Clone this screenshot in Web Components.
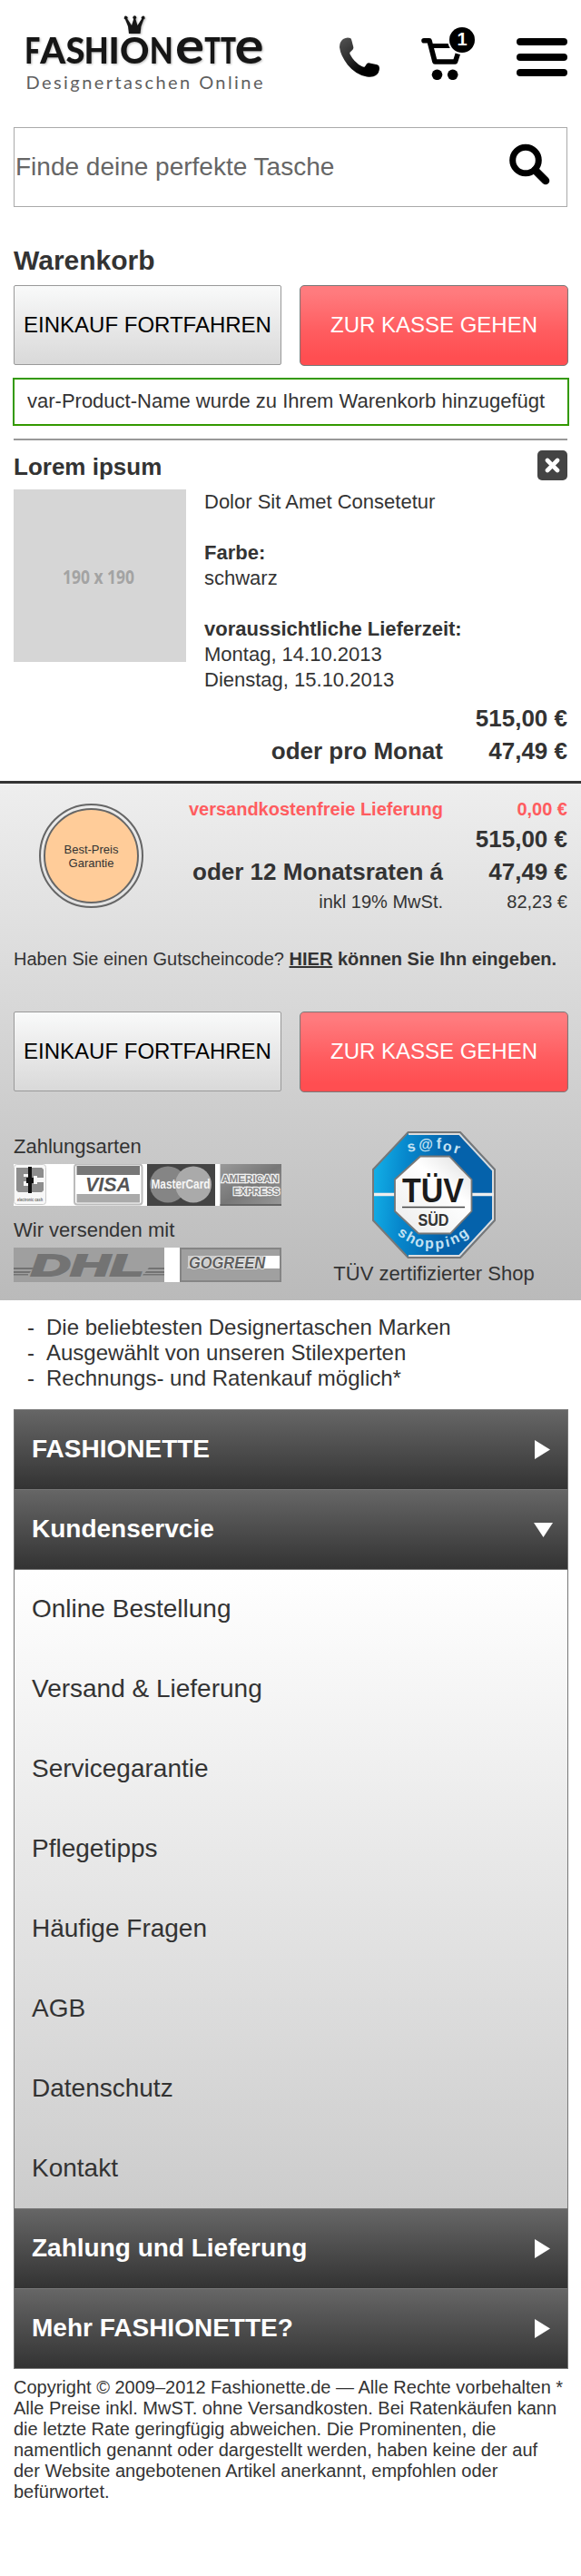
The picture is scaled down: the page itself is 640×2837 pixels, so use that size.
<!DOCTYPE html>
<html lang="de">
<head>
<meta charset="utf-8">
<title>Warenkorb – Fashionette</title>
<style>
html{background:#fff}
body{margin:0;width:640px;height:2837px;overflow-x:hidden;font-family:"Liberation Sans",Arial,sans-serif;color:#333;background:#fff}
</style>
</head>
<body>
<shop-header count="1"></shop-header>
<search-box placeholder="Finde deine perfekte Tasche"></search-box>
<cart-heading>Warenkorb</cart-heading>
<action-bar>
  <shop-button>EINKAUF FORTFAHREN</shop-button>
  <shop-button kind="primary">ZUR KASSE GEHEN</shop-button>
</action-bar>
<notice-box>var-Product-Name wurde zu Ihrem Warenkorb hinzugefügt</notice-box>
<cart-item>
  <span slot="name">Lorem ipsum</span>
  <span slot="desc">Dolor Sit Amet Consetetur</span>
  <span slot="color">schwarz</span>
  <span slot="from">Montag, 14.10.2013</span>
  <span slot="to">Dienstag, 15.10.2013</span>
  <span slot="price">515,00 €</span>
  <span slot="rate">47,49 €</span>
</cart-item>
<order-summary>
  <action-bar slot="actions">
    <shop-button>EINKAUF FORTFAHREN</shop-button>
    <shop-button kind="primary">ZUR KASSE GEHEN</shop-button>
  </action-bar>
  <payment-logos slot="partners"></payment-logos>
  <trust-seal slot="partners"></trust-seal>
</order-summary>
<usp-list>
  <usp-item>Die beliebtesten Designertaschen Marken</usp-item>
  <usp-item>Ausgewählt von unseren Stilexperten</usp-item>
  <usp-item>Rechnungs- und Ratenkauf möglich*</usp-item>
</usp-list>
<nav-accordion>
  <nav-section label="FASHIONETTE"></nav-section>
  <nav-section label="Kundenservcie" open>
    <nav-link>Online Bestellung</nav-link>
    <nav-link>Versand &amp; Lieferung</nav-link>
    <nav-link>Servicegarantie</nav-link>
    <nav-link>Pflegetipps</nav-link>
    <nav-link>Häufige Fragen</nav-link>
    <nav-link>AGB</nav-link>
    <nav-link>Datenschutz</nav-link>
    <nav-link>Kontakt</nav-link>
  </nav-section>
  <nav-section label="Zahlung und Lieferung"></nav-section>
  <nav-section label="Mehr FASHIONETTE?"></nav-section>
</nav-accordion>
<legal-note>Copyright © 2009–2012 Fashionette.de — Alle Rechte vorbehalten * Alle Preise inkl. MwST. ohne Versandkosten. Bei Ratenkäufen kann die letzte Rate geringfügig abweichen. Die Prominenten, die namentlich genannt oder dargestellt werden, haben keine der auf der Website angebotenen Artikel anerkannt, empfohlen oder befürwortet.</legal-note>

<script>
const define = (name, html) => customElements.define(name, class extends HTMLElement {
  constructor() {
    super();
    this.attachShadow({mode: 'open'});
  }
  connectedCallback() {
    this.shadowRoot.innerHTML = typeof html === 'function' ? html(this) : html;
  }
});

define('shop-header', el => `
<style>
:host{display:flex;box-sizing:border-box;height:140px;padding:0 15px 0 20px;align-items:flex-start;gap:46px}
svg{display:block;flex:none}
.logo{margin:0 auto 0 0}
.phone{margin-top:41px}
.cart{position:relative;margin-top:30px;width:59px;height:58px}
.count{position:absolute;right:0;top:0;width:28px;height:28px;border-radius:50%;background:#000;color:#fff;font:bold 20px/27px "Liberation Sans",Arial,sans-serif;text-align:center}
.menu{display:flex;flex-direction:column;gap:9px;margin-top:42px;width:56px}
.menu i{height:8px;border-radius:4px;background:#000}
</style>
<svg class="logo" width="280" height="110" viewBox="20 0 280 110">
  <defs><filter id="s" x="-5%" y="-20%" width="110%" height="150%"><feDropShadow dx="1" dy="1" stdDeviation=".8" flood-color="#000" flood-opacity=".28"/></filter></defs>
  <g fill="#171716" filter="url(#s)">
    <path d="M142 37 L141 29 L138 21.500 a2 2 0 1 1 2.300 -.7 L145 28 L147.200 21 a2 2 0 1 1 2.200 0 L151.500 28 L156 20.800 a2 2 0 1 1 2.300 .7 L155.500 29 L154.500 37 Z"/>
    <g font-family="Lato,sans-serif" font-weight="900" font-size="40">
      <text y="70"><tspan x="27.300" textLength="17" lengthAdjust="spacingAndGlyphs">F</tspan><tspan x="44.300" textLength="28" lengthAdjust="spacingAndGlyphs">A</tspan><tspan x="72.400" textLength="21" lengthAdjust="spacingAndGlyphs">S</tspan><tspan x="92.800" textLength="27" lengthAdjust="spacingAndGlyphs">H</tspan><tspan x="119.600" textLength="12.200" lengthAdjust="spacingAndGlyphs">I</tspan><tspan x="132" textLength="32.500" lengthAdjust="spacingAndGlyphs">O</tspan><tspan x="164.800" textLength="26" lengthAdjust="spacingAndGlyphs">N</tspan><tspan x="193" font-size="55" font-weight="700" textLength="32" lengthAdjust="spacingAndGlyphs">e</tspan><tspan x="225.300" textLength="17.500" lengthAdjust="spacingAndGlyphs">T</tspan><tspan x="243" textLength="17" lengthAdjust="spacingAndGlyphs">T</tspan><tspan x="258.500" font-size="55" font-weight="700" textLength="32" lengthAdjust="spacingAndGlyphs">e</tspan></text>
    </g>
  </g>
  <text x="28.500" y="98" font-family="Lato,sans-serif" font-size="20" fill="#5f5f5f" textLength="261" lengthAdjust="spacing">Designertaschen Online</text>
</svg>
<svg class="phone" width="44" height="44" viewBox="0 0 44 44">
  <defs><linearGradient id="p" x1="0" y1="0" x2=".8" y2="1"><stop offset="0" stop-color="#555"/><stop offset=".45" stop-color="#2b2b2b"/><stop offset=".8" stop-color="#000"/></linearGradient></defs>
  <path fill="url(#p)" d="M4 2 Q8-.5 12 1 Q13 1.500 13.500 4 L15.300 11 Q15.600 13 14 14.300 L11.600 16.500 Q11 17.200 11.600 18.700 Q16 27.500 24.500 32 Q27 33.400 28 32.200 L30 29.300 Q31.200 28 33.200 28.400 L41.500 30.300 Q44 31 44 34 Q44 39 40 42 Q37 44.500 30 43.500 Q18 41.500 9 30.500 Q1 20 0 11 Q0 5 4 2 Z"/>
</svg>
<div class="cart">
  <svg width="59" height="58" viewBox="0 0 59 58">
    <path d="M3 14.800 H9 L15 38 H37.500 L41.500 25.500" fill="none" stroke="#000" stroke-width="5.600" stroke-linecap="round" stroke-linejoin="round"/>
    <path d="M10 20.500 H32" stroke="#000" stroke-width="5"/>
    <circle cx="17.500" cy="52.300" r="5.800"/><circle cx="34.700" cy="52.300" r="5.800"/>
    <circle cx="45" cy="14.500" r="15.700" fill="#fff"/>
  </svg>
  <span class="count">${el.getAttribute('count')}</span>
</div>
<div class="menu"><i></i><i></i><i></i></div>`);

define('search-box', el => `
<style>
:host{display:flex;box-sizing:border-box;margin:0 15px;height:88px;border:1px solid #aaa;align-items:center;justify-content:space-between;padding:0 18px 0 1px}
span{font-size:28px;line-height:32px;color:#666}
svg{display:block;margin-top:-6px}
</style>
<span>${el.getAttribute('placeholder')}</span>
<svg width="46" height="46" viewBox="0 0 46 46" fill="none" stroke="#000"><circle cx="19" cy="18.500" r="14.300" stroke-width="7"/><path d="M29.500 29.500 L41 41" stroke-width="8.600" stroke-linecap="round"/></svg>`);

define('cart-heading', `<style>:host{display:block;margin:42px 15px 10px;font-size:30px;font-weight:bold;line-height:34px}</style><slot></slot>`);

define('action-bar', `<style>:host{display:grid;grid-template-columns:295px 296px;column-gap:20px;align-items:start;height:89px;margin-left:15px}</style><slot></slot>`);

define('shop-button', `
<style>
:host{display:flex;box-sizing:border-box;height:88px;align-items:center;justify-content:center;border:1px solid #999;border-radius:2px;background:linear-gradient(#f9fafa,#ececec 40%,#d9d9d9);color:#000;font-size:24px;white-space:nowrap;padding-bottom:1px}
:host([kind="primary"]){height:89px;padding-bottom:2px;border-color:#777;border-radius:5px;background:linear-gradient(#ff7b7e 8%,#ff5c5f 58%,#ff4e51 90%);color:#fff}
</style><slot></slot>`);

define('notice-box', `<style>:host{display:block;box-sizing:border-box;height:53px;margin:13px 13px 0 14px;padding:0 14px;border:2px solid #390;font-size:22px;line-height:47px;white-space:nowrap}</style><slot></slot>`);

define('cart-item', `
<style>
:host{display:block;margin:14px 15px 0;border-top:2px solid #999;height:375px}
.head{display:flex;justify-content:space-between;align-items:flex-start;height:54px;font-size:26px;line-height:30px;font-weight:bold}
.head slot{display:block;margin-top:14px}
.close{display:flex;width:33px;height:33px;margin-top:11px;border-radius:5px;background:#444;align-items:center;justify-content:center}
.body{display:flex;gap:20px;height:230px}
.pic{flex:none;width:190px;height:190px;background:#d6d6d6}
.pic svg{display:block}
.info{font-size:22px;line-height:28px}
.info div{height:28px}
b{font-weight:bold}
.prices{display:grid;grid-template-columns:1fr 137px;text-align:right;font-size:26px;line-height:36px;font-weight:bold;padding:4px 0 0}
</style>
<div class="head"><slot name="name"></slot><span class="close"><svg width="19" height="19" viewBox="0 0 19 19"><path d="M4 4 L15 15 M15 4 L4 15" stroke="#fff" stroke-width="4.600" stroke-linecap="round"/></svg></span></div>
<div class="body">
  <div class="pic"><svg width="190" height="190"><text x="54" y="104" font-family="Open Sans,Noto Sans,sans-serif" font-weight="700" font-size="21" fill="#a3a3a3" textLength="79" lengthAdjust="spacingAndGlyphs">190 x 190</text></svg></div>
  <div class="info">
    <div><slot name="desc"></slot></div><div></div>
    <div><b>Farbe:</b></div><div><slot name="color"></slot></div><div></div>
    <div><b>voraussichtliche Lieferzeit:</b></div>
    <div><slot name="from"></slot></div><div><slot name="to"></slot></div>
  </div>
</div>
<div class="prices"><span></span><slot name="price"></slot><span>oder pro Monat</span><slot name="rate"></slot></div>`);

define('order-summary', `
<style>
:host{display:block;box-sizing:border-box;height:572px;border-top:3px solid #333;background:linear-gradient(#eee,#bababa)}
.top{display:flex;justify-content:space-between;padding:22px 15px 0 43px}
.badge{box-sizing:border-box;width:115px;height:115px;border:2px solid #666;border-radius:50%;padding:3px}
.badge div{box-sizing:border-box;width:105px;height:105px;border:2px solid #666;border-radius:50%;background:#fc9;display:flex;align-items:center;justify-content:center;text-align:center;font-size:13px;line-height:15px}
.rows{display:grid;grid-template-columns:1fr 137px;grid-template-rows:29px 36px 37px 28px;text-align:right;white-space:nowrap;margin-top:-8px}
.s{font-size:20px;line-height:28px}
.b{font-size:26px;line-height:36px;font-weight:bold}
.r{color:#ff5c5f;font-weight:bold}
.voucher{margin:35px 15px 0;font-size:20px;line-height:28px;white-space:nowrap}
.actions{margin-top:44px}
.partners{display:flex;margin-top:43px}
</style>
<div class="top">
  <div class="badge"><div>Best-Preis<br>Garantie</div></div>
  <div class="rows">
    <span class="s r">versandkostenfreie Lieferung</span><span class="s r">0,00 €</span>
    <span></span><span class="b">515,00 €</span>
    <span class="b">oder 12 Monatsraten á</span><span class="b">47,49 €</span>
    <span class="s">inkl 19% MwSt.</span><span class="s">82,23 €</span>
  </div>
</div>
<div class="voucher">Haben Sie einen Gutscheincode? <b><u>HIER</u> können Sie Ihn eingeben.</b></div>
<div class="actions"><slot name="actions"></slot></div>
<div class="partners"><slot name="partners"></slot></div>`);

define('payment-logos', `
<style>
:host{display:block;margin:3px 0 0 15px;width:295px;font-size:22px}
.t{height:33px;line-height:28px}
svg{display:block}
.t2{margin-top:13px}
</style>
<div class="t">Zahlungsarten</div>
<svg width="295" height="46" viewBox="0 0 295 46" font-family="Liberation Sans,Arial,sans-serif">
  <defs><linearGradient id="ax" x1="0" y1="0" x2="1" y2="1"><stop offset="0" stop-color="#999"/><stop offset=".5" stop-color="#777"/><stop offset="1" stop-color="#999"/></linearGradient></defs>
  <rect width="295" height="46" fill="#fff"/>
  <rect x=".5" y=".5" width="35" height="44" rx="3" fill="#f7f7f7" stroke="#ccc"/>
  <path d="M3 4 H16 V11 H11 V14 H16 V19 H11 V24 H16 V31 H5 L3 29 Z M20 4 H31 L33 6 V15 H26 V13 H22 V22 H26 V20 H33 V29 L31 31 H20 Z" fill="#8d8d8d"/>
  <path d="M16 3 H20 V15 H22 V21 H20 V32 H16 V21 H14 V15 H16 Z" fill="#111"/>
  <text x="4" y="40.500" font-size="5" font-weight="bold" fill="#666" textLength="28" lengthAdjust="spacingAndGlyphs">electronic cash</text>
  <rect x="67" y=".5" width="74.500" height="44" rx="3" fill="#fff" stroke="#bbb" stroke-width="2"/>
  <rect x="69.500" y="2" width="69.500" height="10" fill="#777"/><rect x="69.500" y="33" width="69.500" height="9.500" fill="#aaa"/>
  <text x="79" y="30" font-size="22" font-weight="bold" font-style="italic" fill="#555" textLength="50" lengthAdjust="spacingAndGlyphs">VISA</text>
  <rect x="147" width="75" height="46" fill="#444"/>
  <circle cx="170" cy="22.500" r="20" fill="#858585"/><circle cx="198" cy="22.500" r="20" fill="#aaa"/>
  <text x="151.500" y="27" font-size="14" font-weight="bold" fill="#f6f6f6" textLength="65" lengthAdjust="spacingAndGlyphs">MasterCard</text>
  <rect x="227.500" width="67.500" height="46" fill="url(#ax)"/><path d="M227.500 45 H295" stroke="#666" stroke-width="2"/>
  <g font-size="10.500" font-weight="bold" fill="#858585" stroke="#f1f1f1" stroke-width="2.400" paint-order="stroke">
    <text x="229" y="20" textLength="63" lengthAdjust="spacingAndGlyphs">AMERICAN</text><text x="242" y="34" textLength="51" lengthAdjust="spacingAndGlyphs">EXPRESS</text>
  </g>
</svg>
<div class="t t2">Wir versenden mit</div>
<svg width="295" height="38" viewBox="0 0 295 38" font-family="Liberation Sans,Arial,sans-serif">
  <rect width="295" height="38" fill="#fff"/><rect width="166" height="38" fill="#9f9f9f"/>
  <path fill="#737373" d="M0 22 H22 L20.500 24 H0 Z M0 26 H19 L17.500 28 H0 Z M0 29 H16 V30.500 H0 Z M149 22 H166 V24 H147.500 Z M146 26 H166 V28 H144.500 Z M143 29 H166 V30.500 H142 Z"/>
  <text x="19" y="30.500" font-size="33.500" font-weight="bold" font-style="italic" fill="#737373" stroke="#737373" stroke-width="2" textLength="124" lengthAdjust="spacingAndGlyphs">DHL</text>
  <rect x="184" y="1" width="110" height="36" fill="#a0a0a0" stroke="#858585" stroke-width="2"/>
  <path d="M195 9 H293 V23 H191.500 Z" fill="#fff"/>
  <rect x="192" y="9" width="84" height="14" fill="#ccc"/>
  <text x="193" y="23" font-size="19" font-weight="bold" font-style="italic" fill="#5f5f5f" stroke="#eee" stroke-width="1.500" paint-order="stroke" textLength="84" lengthAdjust="spacingAndGlyphs">GOGREEN</text>
</svg>`);

define('trust-seal', `
<style>
:host{display:block;margin:0 0 0 20px;width:296px;text-align:center;font-size:22px;line-height:28px}
svg{display:block;margin:0 auto 3px}
</style>
<svg width="136" height="140" viewBox="0 0 136 140" font-family="Liberation Sans,Arial,sans-serif" text-anchor="middle">
  <defs><linearGradient id="b" x1="0" y1=".4" x2="1" y2=".5"><stop offset="0" stop-color="#12aee6"/><stop offset=".25" stop-color="#0787cc"/><stop offset=".6" stop-color="#0562ab"/><stop offset="1" stop-color="#0562ab"/></linearGradient>
  <linearGradient id="w" x1="1" y1="0" x2=".2" y2="1"><stop offset="0" stop-color="#ddd"/><stop offset=".4" stop-color="#fff"/><stop offset="1" stop-color="#eee"/></linearGradient></defs>
  <path d="M39.500 1 H97 L135 42 V98 L97 139 H39.500 L1 98 V42 Z" fill="url(#b)" stroke="#777" stroke-width="2"/>
  <path d="M40 3 H96 L133 43 V97 L96 137 H40" fill="none" stroke="#ddd" stroke-width="2"/>
  <path d="M2 69.500 H134" stroke="#eee" stroke-width="3.500"/>
  <path d="M53 27.500 H85 L109.500 53 V88 L86 112.500 H51 L25 88 V53 Z" fill="url(#w)" stroke="#777" stroke-width="1.800"/>
  <text x="67" y="78" font-size="36" font-weight="bold" fill="#1b1b1b" textLength="68" lengthAdjust="spacingAndGlyphs">TÜV</text>
  <path d="M33 83.500 H102" stroke="#444" stroke-width="1.500"/>
  <text x="67.500" y="103.500" font-size="19" font-weight="bold" fill="#333" textLength="34" lengthAdjust="spacingAndGlyphs">SÜD</text>
  <g fill="#c4e2f3" font-weight="bold">
    <g font-size="16"><text transform="translate(44,22) rotate(-10)">s</text><text x="59" y="20">@</text><text x="73.500" y="19">f</text><text transform="translate(82,22) rotate(8)">o</text><text transform="translate(92,24) rotate(16)">r</text></g>
    <g font-size="16"><text transform="translate(31,116) rotate(35)">s</text><text transform="translate(40.500,122) rotate(28)">h</text><text transform="translate(51,127) rotate(14)">o</text><text transform="translate(63,129)">p</text><text transform="translate(74.500,129) rotate(-5)">p</text><text transform="translate(84,127) rotate(-12)">i</text><text transform="translate(93,123) rotate(-25)">n</text><text transform="translate(103,117) rotate(-35)">g</text></g>
  </g>
</svg>
TÜV zertifizierter Shop`);

define('usp-list', `<style>:host{display:block;margin:16px 15px 0;padding-left:15px;height:104px}</style><slot></slot>`);
define('usp-item', `<style>:host{display:flex;font-size:24px;line-height:28px;height:28px}i{font-style:normal;width:21px}</style><i>-</i><slot></slot>`);

define('nav-accordion', `<style>:host{display:block;box-sizing:border-box;width:611px;margin-left:15px;border:1px solid #777;border-top:0}</style><slot></slot>`);
define('nav-section', el => `
<style>
:host{display:block}
.head{display:flex;box-sizing:border-box;height:88px;border-top:1px solid #777;padding:0 19px;align-items:center;justify-content:space-between;background:linear-gradient(#666,#333);color:#fff;font-size:28px;font-weight:bold}
.head span{margin-bottom:2px}
.panel{box-sizing:border-box;border-top:1px solid #777;background:linear-gradient(#fff,#ccc)}
svg{display:block}
:host([open]) svg{margin-right:-3px}
</style>
<div class="head"><span>${el.getAttribute('label')}</span>${el.hasAttribute('open')
  ? '<svg width="21" height="16"><path d="M0 0 H21 L10.500 16 Z" fill="#fff"/></svg>'
  : '<svg width="17" height="21"><path d="M0 0 L17 10.500 L0 21 Z" fill="#fff"/></svg>'}</div>
${el.hasAttribute('open') ? '<div class="panel"><slot></slot></div>' : ''}`);
define('nav-link', `<style>:host{display:flex;box-sizing:border-box;height:88px;align-items:center;padding:0 0 1px 19px;font-size:28px}:host(:first-child){height:87px;padding-bottom:2px}</style><slot></slot>`);
define('legal-note', `<style>:host{display:block;margin:9px 15px 0;font-size:20px;line-height:23px}</style><slot></slot>`);
</script>
</body>
</html>
